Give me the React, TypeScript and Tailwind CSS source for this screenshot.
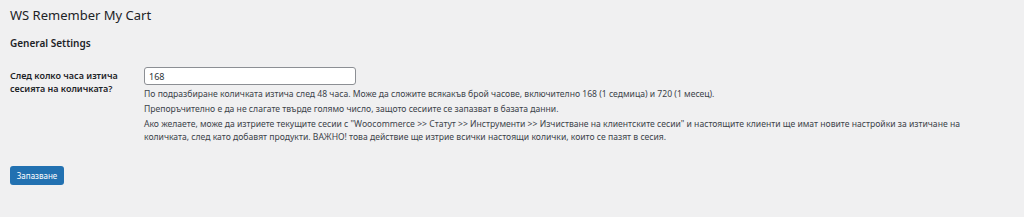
export default function App() {
  return (
    <div
      lang="bg"
      className="min-h-[217px] w-full bg-[#f0f0f1] pl-[10px] pr-[14px] pt-[6px] text-[#1d2327]"
      style={{ fontFamily: '"Noto Sans", "Liberation Sans", sans-serif' }}
    >
      <h1 className="text-[13px] leading-[18px] font-normal">WS Remember My Cart</h1>
      <h2 className="mt-[13px] text-[10px] leading-[12px] font-semibold">General Settings</h2>
      <div className="mt-[18px] flex">
        <div className="w-[134px] shrink-0 pt-[2px] text-[9px] leading-[13px] font-semibold">
          След колко часа изтича
          <br />
          сесията на количката?
        </div>
        <div className="flex-1 text-[8.6px] leading-[13px] text-[#3c434a]">
          <input
            type="text"
            defaultValue="168"
            className="block h-[18px] w-[212px] rounded-[3px] border border-[#8c8f94] bg-white px-[4px] text-[9px] text-[#2c3338] outline-none"
          />
          <p className="mt-[3px]">
            По подразбиране количката изтича след 48 часа. Може да сложите всякакъв брой часове, включително 168 (1
            седмица) и 720 (1 месец).
          </p>
          <p className="mt-[2px]">
            Препоръчително е да не слагате твърде голямо число, защото сесиите се запазват в базата данни.
          </p>
          <p className="mt-[2px] pr-[4px]">
            Ако желаете, може да изтриете текущите сесии с "Woocommerce &gt;&gt; Статут &gt;&gt; Инструменти &gt;&gt;
            Изчистване на клиентските сесии" и настоящите клиенти ще имат новите настройки за изтичане на количката,
            след като добавят продукти. ВАЖНО! това действие ще изтрие всички настоящи колички, които се пазят в сесия.
          </p>
        </div>
      </div>
      <button className="mt-[22px] h-[19px] w-[54px] rounded-[3px] bg-[#2271b1] text-[8px] text-white">
        Запазване
      </button>
    </div>
  );
}
